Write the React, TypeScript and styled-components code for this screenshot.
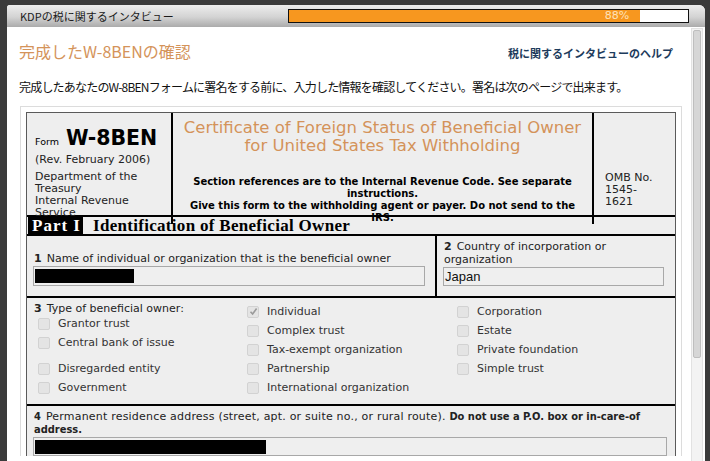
import React from 'react'
import styled, { createGlobalStyle } from 'styled-components'

const GlobalStyle = createGlobalStyle`
  html, body {
    margin: 0;
    padding: 0;
  }
  body {
    width: 710px;
    height: 461px;
    overflow: hidden;
    background: #3b3b3b;
    font-family: "DejaVu Sans", Verdana, sans-serif;
  }
`;

const JP = `"Noto Sans CJK JP", sans-serif`;

const Modal = styled.div`
  margin: 5px 5px 0 7px;
  height: 456px;
  display: flex;
  flex-direction: column;
  background: #fff;
  border-radius: 3px 6px 0 0;
  overflow: hidden;
`;

const TitleBar = styled.div`
  flex: none;
  height: 22px;
  display: flex;
  align-items: center;
  justify-content: space-between;
  padding: 0 16px 0 13px;
  background: linear-gradient(to bottom, #ededed 0%, #d3d3d3 55%, #ababab 100%);
  font: 11px/22px ${JP};
  color: #1a1a1a;
`;

const Progress = styled.div`
  width: 401px;
  height: 14px;
  box-sizing: border-box;
  border: 1px solid #111;
  background: #fff;
  display: flex;
`;

const ProgressFill = styled.div`
  height: 100%;
  background: #f7971f;
  display: flex;
  align-items: center;
  justify-content: flex-end;
  padding-right: 11px;
  box-sizing: border-box;
  color: #fde2bb;
  font: 11px/12px "DejaVu Sans", sans-serif;
`;

const Body = styled.div`
  flex: 1;
  display: flex;
  min-height: 0;
`;

const Content = styled.div`
  flex: 1;
  min-width: 0;
  padding-left: 12px;
  overflow: hidden;
`;

const ScrollTrack = styled.div`
  width: 12px;
  margin: 1px 2px 0 0;
  box-sizing: border-box;
  padding: 1px;
  background: #f3f3f3;
  border: 1px solid #e2e2e2;
  border-bottom: none;
`;

const ScrollThumb = styled.div`
  height: 328px;
  box-sizing: border-box;
  background: #d6d6d6;
  border: 1px solid #bebebe;
  border-radius: 2px;
`;

const HeadRow = styled.div`
  display: flex;
  justify-content: space-between;
  align-items: baseline;
  padding: 14px 18px 0 0;
`;

const Heading = styled.h1`
  margin: 0;
  font: 16px/20px ${JP};
  color: #d4935a;
`;

const HelpLink = styled.a`
  font: bold 11px/14px ${JP};
  color: #1d3b5c;
  text-decoration: none;
`;

const Intro = styled.p`
  margin: 18px 0 0;
  font: 12px/16px ${JP};
  letter-spacing: -0.8px;
  color: #111;
`;

const FormFrame = styled.div`
  margin: 11px 9px 0 1px;
  padding: 5px 5px 0;
  border: 1px solid #dcdcdc;
  border-bottom: none;
`;

const Form = styled.div`
  background: #eeeeee;
  border: 1px solid #5a5a5a;
  border-bottom: none;
  color: #222;
`;

const Header = styled.div`
  display: grid;
  grid-template-columns: 146px 421px 1fr;
  height: 102px;
  border-bottom: 2px solid #000;
`;

const FormIdCell = styled.div`
  border-right: 2px solid #000;
  padding: 13px 0 0 8px;
  overflow: hidden;
  font: 11px/12px "DejaVu Sans", sans-serif;
`;

const FormName = styled.div`
  font: bold 20.5px/24px "DejaVu Sans", sans-serif;
  color: #000;
  small {
    font: 9.5px "DejaVu Sans", sans-serif;
    margin-right: 7px;
  }
`;

const Rev = styled.div`
  margin-top: 3px;
  line-height: 13px;
`;

const Dept = styled.div`
  margin-top: 5px;
`;

const TitleCell = styled.div`
  border-right: 2px solid #000;
  padding-top: 6px;
  text-align: center;
`;

const CertTitle = styled.div`
  font: 16.5px/18px "DejaVu Sans", sans-serif;
  color: #d4935a;
`;

const Notes = styled.div`
  margin-top: 21px;
  padding: 0 6px;
  font: bold 10px/12px "DejaVu Sans", sans-serif;
  color: #000;
`;

const OmbCell = styled.div`
  padding: 59px 0 0 11px;
  font: 11px/12px "DejaVu Sans", sans-serif;
  width: 50px;
`;

const PartRow = styled.div`
  display: flex;
  height: 17px;
  border-bottom: 2px solid #000;
`;

const PartTag = styled.span`
  margin-left: 1px;
  padding: 0 2px 0 4px;
  background: #000;
  color: #fff;
  letter-spacing: 1px;
  font: bold 17px/17px "Liberation Serif", serif;
`;

const PartTitle = styled.span`
  margin-left: 10px;
  color: #000;
  letter-spacing: 0.3px;
  font: bold 17px/17px "Liberation Serif", serif;
`;

const NameRow = styled.div`
  display: flex;
  padding: 0 11px 0 6px;
  border-bottom: 2px solid #000;
`;

const Field = styled.div<{ $w?: number; $divided?: boolean }>`
  ${p => (p.$w ? `width: ${p.$w}px;` : 'flex: 1;')}
  display: flex;
  flex-direction: column;
  justify-content: flex-end;
  padding: ${p => (p.$divided ? '4px 0 10px 6px' : '0 10px 10px 0')};
  border-left: ${p => (p.$divided ? '2px solid #000' : 'none')};
`;

const Label = styled.div`
  font: 11px/13px "DejaVu Sans", sans-serif;
  padding-left: 1px;
  b {
    margin-right: 5px;
  }
`;

const TextBox = styled.div<{ $h?: number }>`
  height: ${p => p.$h ?? 20}px;
  margin-top: 1px;
  box-sizing: border-box;
  border: 1px solid #a8a8a8;
  background: #efefef;
  display: flex;
  align-items: center;
  padding-left: 1px;
  font: 13px "Liberation Sans", Arial, sans-serif;
  color: #111;
`;

const Redacted = styled.span<{ $w: number }>`
  display: block;
  width: ${p => p.$w}px;
  height: 14px;
  background: #000;
`;

const TypeRow = styled.div`
  display: grid;
  grid-template-columns: 213px 210px 1fr;
  padding: 4px 0 7px 7px;
  border-bottom: 2px solid #000;
`;

const TypeCol = styled.div`
  display: flex;
  flex-direction: column;
`;

const TypeLabel = styled.div`
  font: 11px/12px "DejaVu Sans", sans-serif;
  margin-top: 1px;
  margin-bottom: -1px;
  b {
    margin-right: 5px;
  }
`;

const Option = styled.label<{ $indent?: number; $gap?: number }>`
  display: flex;
  align-items: center;
  gap: 8px;
  height: 19px;
  padding-left: ${p => p.$indent ?? 0}px;
  margin-top: ${p => p.$gap ?? 0}px;
  font: 11px "DejaVu Sans", sans-serif;
  color: #333;
`;

const Box = styled.span`
  flex: none;
  width: 12px;
  height: 12px;
  box-sizing: border-box;
  border: 1px solid #d2d2d2;
  border-radius: 2px;
  background: #e4e4e4;
  display: flex;
  align-items: center;
  justify-content: center;
`;

const AddressRow = styled.div`
  padding: 4px 8px 0 6px;
`;

const AddressLabel = styled.div`
  font: 11px/13px "DejaVu Sans", sans-serif;
  letter-spacing: 0.2px;
  padding-left: 1px;
  b {
    font-family: "DejaVu Sans Condensed", "DejaVu Sans", sans-serif;
    letter-spacing: 0;
  }
  b:first-child {
    margin-right: 5px;
  }
`;

const Check = ({ checked }: { checked?: boolean }) => (
  <Box>
    {checked && (
      <svg width="9" height="9" viewBox="0 0 9 9">
        <path d="M1.5 4.8 L3.6 7 L7.6 1.6" fill="none" stroke="#9a9a9a" strokeWidth="1.6" />
      </svg>
    )}
  </Box>
);

const colA = ['Grantor trust', 'Central bank of issue', 'Disregarded entity', 'Government'];
const colB = ['Individual', 'Complex trust', 'Tax-exempt organization', 'Partnership', 'International organization'];
const colC = ['Corporation', 'Estate', 'Private foundation', 'Simple trust'];

export default function App() {
  const pct = 88;
  return (
    <>
      <GlobalStyle />
      <Modal>
        <TitleBar>
          <span>KDPの税に関するインタビュー</span>
          <Progress>
            <ProgressFill style={{ width: `${pct}%` }}>{pct}%</ProgressFill>
          </Progress>
        </TitleBar>
        <Body>
          <Content>
            <HeadRow>
              <Heading>完成したW-8BENの確認</Heading>
              <HelpLink href="#">税に関するインタビューのヘルプ</HelpLink>
            </HeadRow>
            <Intro>
              完成したあなたのW-8BENフォームに署名をする前に、入力した情報を確認してください。署名は次のページで出来ます。
            </Intro>
            <FormFrame>
              <Form>
                <Header>
                  <FormIdCell>
                    <FormName>
                      <small>Form</small>W-8BEN
                    </FormName>
                    <Rev>(Rev. February 2006)</Rev>
                    <Dept>
                      Department of the
                      <br />
                      Treasury
                      <br />
                      Internal Revenue
                      <br />
                      Service
                    </Dept>
                  </FormIdCell>
                  <TitleCell>
                    <CertTitle>
                      Certificate of Foreign Status of Beneficial Owner
                      <br />
                      for United States Tax Withholding
                    </CertTitle>
                    <Notes>
                      Section references are to the Internal Revenue Code. See separate instructions.
                      <br />
                      Give this form to the withholding agent or payer. Do not send to the IRS.
                    </Notes>
                  </TitleCell>
                  <OmbCell>OMB No. 1545- 1621</OmbCell>
                </Header>
                <PartRow>
                  <PartTag>Part I</PartTag>
                  <PartTitle>Identification of Beneficial Owner</PartTitle>
                </PartRow>
                <NameRow>
                  <Field $w={392}>
                    <Label>
                      <b>1</b>Name of individual or organization that is the beneficial owner
                    </Label>
                    <TextBox>
                      <Redacted $w={99} />
                    </TextBox>
                  </Field>
                  <Field $divided>
                    <Label>
                      <b>2</b>Country of incorporation or organization
                    </Label>
                    <TextBox $h={19}>Japan</TextBox>
                  </Field>
                </NameRow>
                <TypeRow>
                  <TypeCol>
                    <TypeLabel>
                      <b>3</b>Type of beneficial owner:
                    </TypeLabel>
                    {colA.map((t, i) => (
                      <Option key={t} $indent={4} $gap={i === 2 ? 7 : 0}>
                        <Check />
                        {t}
                      </Option>
                    ))}
                  </TypeCol>
                  <TypeCol>
                    {colB.map(t => (
                      <Option key={t}>
                        <Check checked={t === 'Individual'} />
                        {t}
                      </Option>
                    ))}
                  </TypeCol>
                  <TypeCol>
                    {colC.map(t => (
                      <Option key={t}>
                        <Check />
                        {t}
                      </Option>
                    ))}
                  </TypeCol>
                </TypeRow>
                <AddressRow>
                  <AddressLabel>
                    <b>4</b>Permanent residence address (street, apt. or suite no., or rural route).{' '}
                    <b>Do not use a P.O. box or in-care-of address.</b>
                  </AddressLabel>
                  <TextBox $h={19}>
                    <Redacted $w={231} />
                  </TextBox>
                </AddressRow>
              </Form>
            </FormFrame>
          </Content>
          <ScrollTrack>
            <ScrollThumb />
          </ScrollTrack>
        </Body>
      </Modal>
    </>
  );
}
